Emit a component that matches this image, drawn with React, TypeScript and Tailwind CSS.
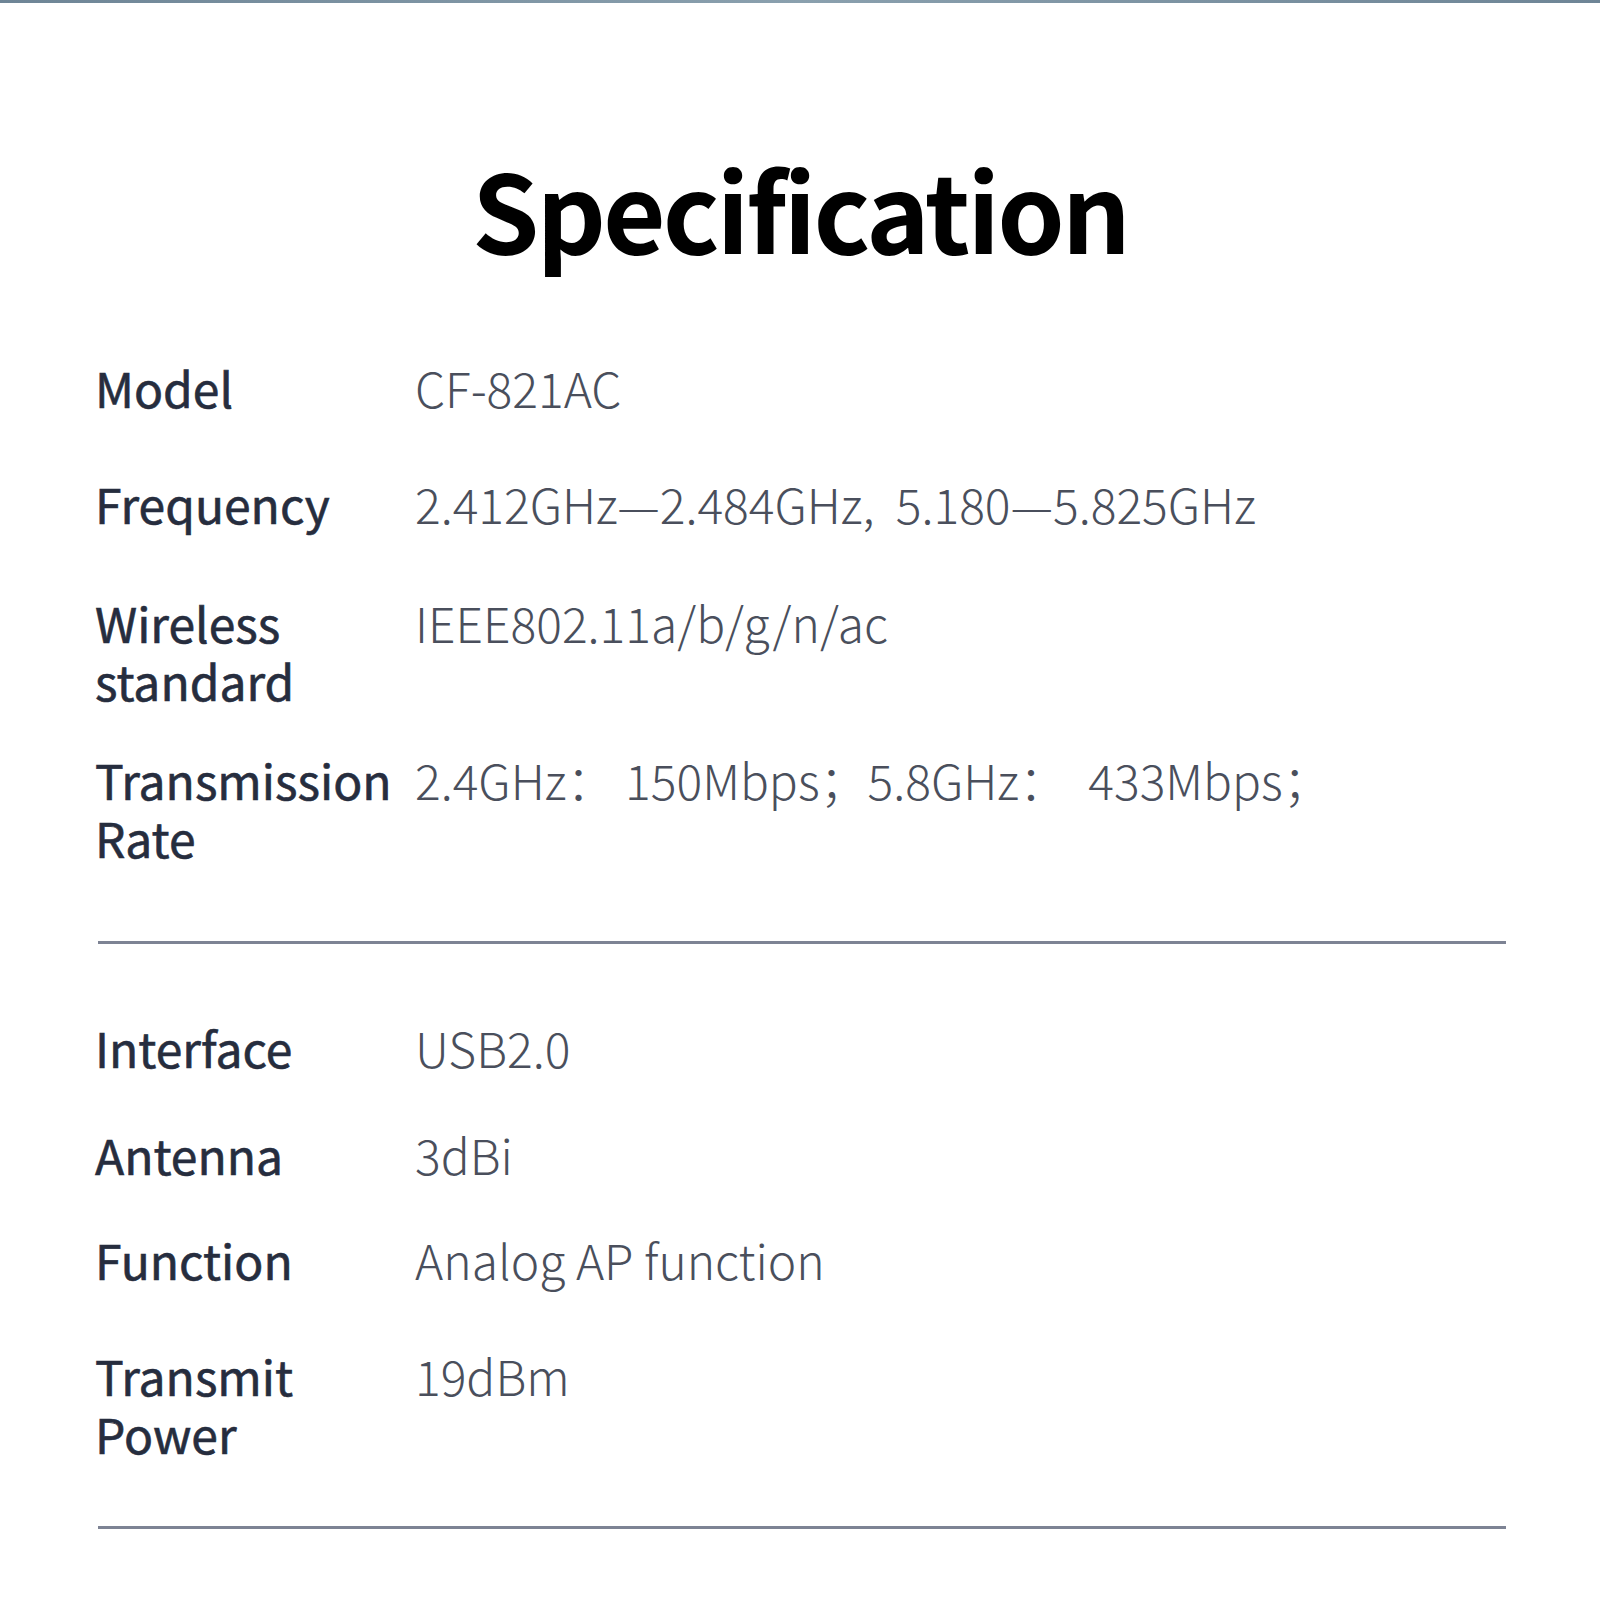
const rowsA = [
  { label: ["Model"], value: "CF-821AC", mt: "mt-[208px]" },
  { label: ["Frequency"], value: "2.412GHz—2.484GHz,  5.180—5.825GHz", mt: "mt-[58px]" },
  { label: ["Wireless", "standard"], value: "IEEE802.11a/b/g/n/ac", mt: "mt-[61px]" },
  { label: ["Transmission", "Rate"], value: "2.4GHz： 150Mbps；5.8GHz：  433Mbps；", mt: "mt-[41px]" },
];

const rowsB = [
  { label: ["Interface"], value: "USB2.0", mt: "mt-[74px]" },
  { label: ["Antenna"], value: "3dBi", mt: "mt-[49px]" },
  { label: ["Function"], value: "Analog AP function", mt: "mt-[47px]" },
  { label: ["Transmit", "Power"], value: "19dBm", mt: "mt-[58px]" },
];

type Row = { label: string[]; value: string; mt: string };

function SpecRow({ row }: { row: Row }) {
  return (
    <div className={`flex ${row.mt}`}>
      <div className="w-[320px] shrink-0 font-normal text-[#262d3e] [-webkit-text-stroke:0.6px_#262d3e]">
        {row.label.map((l) => (
          <div key={l}>{l}</div>
        ))}
      </div>
      <div className="whitespace-pre font-light text-[#4a4f5c]">{row.value}</div>
    </div>
  );
}

export default function App() {
  return (
    <div className="w-[1600px] h-[1600px] bg-white relative font-['Noto_Sans_CJK_SC','Noto_Sans',sans-serif]">
      <div className="h-[3px] bg-gradient-to-r from-[#6e8596] via-[#8aa0ae] to-[#6e8596]" />
      <h1 className="mt-[150px] text-center text-[108px] leading-none font-bold text-black tracking-[-3px]">
        Specification
      </h1>
      <div className="absolute left-0 top-0 w-full pl-[95px] text-[48px] leading-[58px]">
        <div className="h-[150px]" />
        {rowsA.map((r) => (
          <SpecRow key={r.value} row={r} />
        ))}
        <div className="mt-[75px] mr-[94px] ml-[3px] h-[3px] bg-[#7d8394]" />
        {rowsB.map((r) => (
          <SpecRow key={r.value} row={r} />
        ))}
        <div className="mt-[64px] mr-[94px] ml-[3px] h-[3px] bg-[#7d8394]" />
      </div>
    </div>
  );
}
